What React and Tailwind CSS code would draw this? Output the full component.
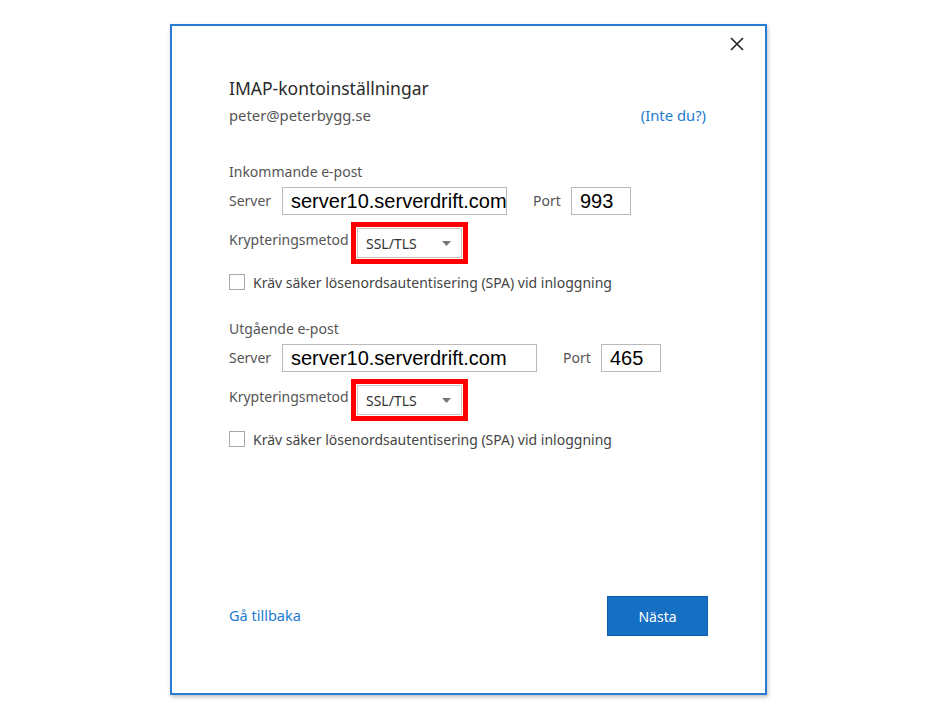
import React from "react";

const font = { fontFamily: '"Noto Sans", "Open Sans", sans-serif' };

const Field = ({ value, width }) => (
  <div
    className={`h-[28px] ${width} border border-[#b9b9b9] bg-white px-[8px] flex items-center text-[20px] text-black leading-none overflow-hidden whitespace-nowrap`}
    style={{ fontFamily: '"Liberation Sans", Arial, sans-serif' }}
  >
    {value}
  </div>
);

const EncryptionSelect = () => (
  <div className="border-[5px] border-[#ff0000] p-px bg-white">
    <div className="w-[105px] h-[30px] border border-[#c6c6c6] bg-white flex items-center justify-between pl-[8px] pr-[10px]">
      <span className="text-[14px] text-[#333]">SSL/TLS</span>
      <svg width="9" height="5" viewBox="0 0 9 5">
        <path d="M0 0 L9 0 L4.5 5 Z" fill="#777" />
      </svg>
    </div>
  </div>
);

const Section = ({ title, inputWidth, port }) => (
  <div>
    <div className="h-[20px] text-[14px] leading-[20px] text-[#555]">{title}</div>
    <div className="mt-[5px] flex items-center h-[28px]">
      <span className="w-[53px] text-[14px] text-[#555] -mt-[2px]">Server</span>
      <Field value="server10.serverdrift.com" width={inputWidth} />
      <span className="ml-[26px] w-[38px] text-[14px] text-[#555] -mt-[2px]">Port</span>
      <Field value={port} width="w-[60px]" />
    </div>
    <div className="mt-[7px] flex items-start h-[42px]">
      <span className="w-[122px] text-[14px] text-[#555] mt-[7px]">Krypteringsmetod</span>
      <EncryptionSelect />
    </div>
    <div className="mt-[10px] flex items-center h-[16px]">
      <div className="w-[16px] h-[16px] border border-[#a8a8a8] bg-white" />
      <span className="ml-[8px] text-[14px] text-[#444]">
        Kräv säker lösenordsautentisering (SPA) vid inloggning
      </span>
    </div>
  </div>
);

export default function App() {
  return (
    <div className="min-h-[720px] bg-white pt-[24px] pl-[170px]" style={font}>
      <div className="relative w-[597px] h-[671px] border-2 border-[#2a7bd4] bg-white shadow-[1px_2px_4px_rgba(0,0,0,0.25)] flex flex-col">
        <button className="absolute right-[20px] top-[10px] w-[16px] h-[16px] flex items-center justify-center">
          <svg width="14" height="14" viewBox="0 0 14 14">
            <path d="M1 1 L13 13 M13 1 L1 13" stroke="#222" strokeWidth="1.6" />
          </svg>
        </button>

        <div className="pl-[57px] pr-[59px]">
          <div className="mt-[50px] h-[24px] text-[17.5px] leading-[24px] text-[#2b2b2b]">
            IMAP-kontoinställningar
          </div>
          <div className="mt-[4px] flex justify-between h-[22px] text-[14.8px] leading-[22px]">
            <span className="text-[#555]">peter@peterbygg.se</span>
            <span className="text-[#1e7bd0]">(Inte du?)</span>
          </div>

          <div className="mt-[36px]">
            <Section title="Inkommande e-post" inputWidth="w-[225px]" port="993" />
          </div>
          <div className="mt-[29px]">
            <Section title="Utgående e-post" inputWidth="w-[255px]" port="465" />
          </div>
        </div>

        <div className="mt-auto mb-[57px] pl-[57px] pr-[57px] flex items-center justify-between">
          <span className="text-[14.5px] text-[#1e7bd0]">Gå tillbaka</span>
          <button className="w-[101px] h-[40px] bg-[#156fc2] border border-[#0f5ea8] text-white text-[14px]">
            Nästa
          </button>
        </div>
      </div>
    </div>
  );
}
